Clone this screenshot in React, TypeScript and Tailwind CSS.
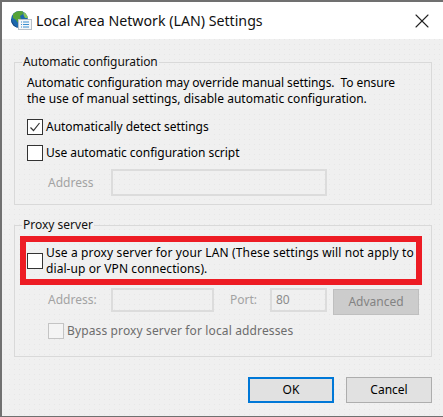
import { X } from "lucide-react";

const GlobeIcon = () => (
  <svg width="21" height="21" viewBox="0 0 21 21" className="shrink-0">
    <circle cx="8.5" cy="9.5" r="8.5" fill="#1c68ad" />
    <path d="M2 4 C5 0.5 10 0.5 12 1.5 L12 4 L9 6 L10 9 L7 13 L5 10 L2 8 Z" fill="#55a238" />
    <path d="M12.5 2 C15 3 16.5 6 17 8 L14 8 L12.5 5 Z" fill="#86c25a" />
    <path d="M0.5 9 C1 13 4 17 8.5 18 C4 18 0 14 0 9 Z" fill="#16407a" />
    <rect x="7.5" y="9.5" width="13" height="10" fill="#f5f7f9" stroke="#b8c0c8" />
    <path d="M10 12h1M12 12h6M10 14.5h1M12 14.5h6M10 17h1M12 17h6" stroke="#3a8fd0" />
  </svg>
);

const Checkbox = ({ checked, disabled }: { checked?: boolean; disabled?: boolean }) => (
  <span
    className={
      disabled
        ? "w-4 h-4 shrink-0 border border-[#c4c4c4] bg-[#f4f4f4] flex"
        : "w-4 h-4 shrink-0 border border-[#333333] bg-white flex"
    }
  >
    {checked && (
      <svg width="14" height="14" viewBox="0 0 14 14" fill="none">
        <path d="M2.5 7.5 L5.5 10.5 L11.5 3" stroke="#333333" strokeWidth="1.2" />
      </svg>
    )}
  </span>
);

const Field = ({ className, value }: { className: string; value?: string }) => (
  <div className={`border-2 border-[#dcdcdc] pl-[4px] flex items-center text-[#8c8c8c] ${className}`}>{value}</div>
);

export default function App() {
  return (
    <div className="w-[443px] h-[417px] flex flex-col border-t-2 border-l-2 border-b border-[#707070] bg-[#f0f0f0] bg-[radial-gradient(circle,#e7e7e7_0.6px,transparent_0.9px)] bg-[length:5px_5px] text-[12px] leading-[16px] text-black font-['Noto_Sans',sans-serif] overflow-hidden">
      <div className="h-[37px] shrink-0 bg-white flex items-center pl-[9px] pr-[9px]">
        <GlobeIcon />
        <span className="ml-[4px] text-[14.2px] text-[#111111]">Local Area Network (LAN) Settings</span>
        <X className="ml-auto" size={24} strokeWidth={1.1} color="#222222" />
      </div>

      <div className="flex flex-col pl-[12px] pr-[11px] grow">
        <fieldset className="h-[151px] mt-[15px] border border-[#d9d9d9] flex flex-col">
          <legend className="ml-[7px] px-[1px] text-[#111111] tracking-[-0.1px]">Automatic configuration</legend>
          <div className="pl-[12px] flex flex-col">
            <p className="mt-[5px] whitespace-nowrap">
              <span className="tracking-[-0.07px]">Automatic configuration may override manual settings.&nbsp; To ensure</span>
              <br />
              <span className="tracking-[0.02px]">the use of manual settings, disable automatic configuration.</span>
            </p>
            <label className="flex items-center gap-[3px] mt-[12px] tracking-[-0.02px]">
              <Checkbox checked />
              Automatically detect settings
            </label>
            <label className="flex items-center gap-[3px] mt-[10px] tracking-[-0.04px]">
              <Checkbox />
              Use automatic configuration script
            </label>
            <div className="flex items-center mt-[8px]">
              <span className="w-[84px] pl-[21px] text-[#a3a3a3]">Address</span>
              <Field className="w-[216px] h-[27px]" />
            </div>
          </div>
        </fieldset>

        <fieldset className="h-[140px] mt-[12px] border border-[#d9d9d9] flex flex-col">
          <legend className="ml-[7px] px-[1px] text-[#111111]">Proxy server</legend>
          <div className="pl-[5px] flex flex-col">
            <div className="w-[402px] h-[49px] border-[6px] border-[#ed1c24] mt-[3px] pl-[1px] flex items-center gap-[3px] whitespace-nowrap">
              <Checkbox />
              <span>
                <span className="tracking-[0.13px]">Use a proxy server for your LAN (These settings will not apply to</span>
                <br />
                <span className="tracking-[0.08px]">dial-up or VPN connections).</span>
              </span>
            </div>
            <div className="flex items-start mt-[3px] pl-[7px]">
              <span className="w-[84px] pl-[21px] mt-[4px] text-[#a3a3a3]">Address:</span>
              <Field className="w-[103px] h-[24px]" />
              <span className="w-[56px] pl-[16px] mt-[4px] text-[#a3a3a3]">Port:</span>
              <Field className="w-[57px] h-[24px]" value="80" />
              <button className="ml-[6px] w-[86px] h-[26px] mt-[1px] border border-[#bfbfbf] bg-[#cccccc] text-[#838383]">
                Advanced
              </button>
            </div>
            <label className="flex items-center gap-[3px] mt-[8px] pl-[28px] text-[#6d6d6d] tracking-[0.13px]">
              <Checkbox disabled />
              Bypass proxy server for local addresses
            </label>
          </div>
        </fieldset>

        <div className="flex justify-end gap-[12px] mt-[20px]">
          <button className="w-[86px] h-[26px] border-2 border-[#0078d7] bg-[#e1e1e1]">OK</button>
          <button className="w-[86px] h-[26px] border border-[#adadad] bg-[#e1e1e1]">Cancel</button>
        </div>
      </div>
    </div>
  );
}
